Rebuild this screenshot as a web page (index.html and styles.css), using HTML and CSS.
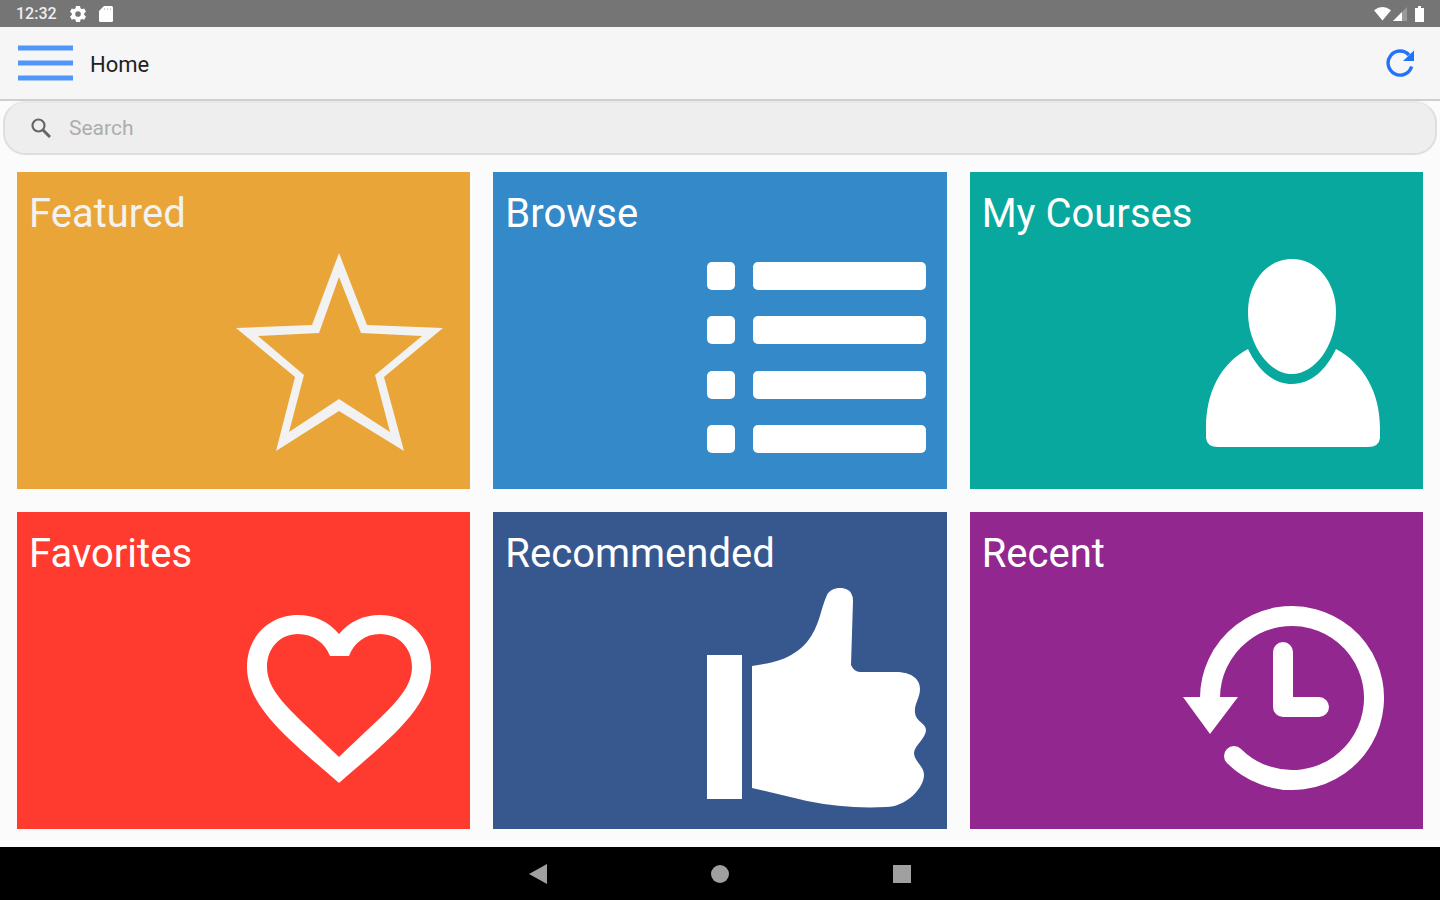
FILE: index.html
```html
<!DOCTYPE html>
<html lang="en">
<head>
<meta charset="utf-8">
<meta name="viewport" content="width=device-width, initial-scale=1">
<title>Home</title>
<link rel="stylesheet" href="styles.css">
</head>
<body>
<div class="status">
  <div class="status-group">
    <span class="clock">12:32</span>
    <svg width="16" height="18" viewBox="0 0 16 18" aria-hidden="true"><path fill="#fff" fill-rule="evenodd" d="M6 1h4l.5 2.300 1.500.9 2.200-.8 1.800 3.300-1.800 1.500v1.700l1.800 1.500-1.800 3.300-2.200-.8-1.500.9L10 17H6l-.5-2.200-1.500-.9-2.200.8L0 11.400l1.800-1.500V8.200L0 6.700l1.800-3.300 2.200.8 1.500-.9zM8 6.200a2.800 2.800 0 1 0 0 5.600 2.800 2.800 0 0 0 0-5.600z"/></svg>
    <svg width="14" height="18" viewBox="0 0 14 18" aria-hidden="true"><path fill="#fff" d="M5 1h7.500Q14 1 14 2.500v13q0 1.500-1.500 1.500h-11Q0 17 0 15.500V6z"/><path stroke="#ccc" d="M5.500 3v2M8.500 3v2M11.500 3v2"/></svg>
  </div>
  <div class="status-group status-right">
    <svg width="17" height="16" viewBox="0 0 18 16" aria-hidden="true"><path fill="#fff" d="M0 4q9-7 18 0L9 15z"/></svg>
    <svg width="14" height="14" viewBox="0 0 14 14" aria-hidden="true"><path fill="#999" d="M14 0v14H0z"/><path fill="#fff" d="M9 5v9H0z"/></svg>
    <svg class="battery" width="9" height="16" viewBox="0 0 9 16" aria-hidden="true"><path fill="#fff" d="M3 0h3v2h3v14H0V2h3z"/></svg>
  </div>
</div>

<header class="bar">
  <button class="icon-button" type="button" aria-label="Menu">
    <svg width="55" height="36" viewBox="0 0 55 36"><path stroke="#5197fb" stroke-width="5" d="M0 3h55M0 18h55M0 33h55"/></svg>
  </button>
  <h1 class="bar-title">Home</h1>
  <button class="icon-button" type="button" aria-label="Refresh">
    <svg width="28" height="28" viewBox="0 0 28 28"><path fill="none" stroke="#2272fa" stroke-width="3.400" d="M25.600 17.500A12 12 0 1 1 23 6"/><path fill="#2272fa" d="M28 1.500V12H17z"/></svg>
  </button>
</header>

<main class="content">
  <form class="search" role="search">
    <label class="search-label" for="q" aria-label="Search">
      <svg width="20" height="20" viewBox="0 0 20 20"><circle cx="7.500" cy="7.500" r="6" fill="none" stroke="#666" stroke-width="2.200"/><path stroke="#666" stroke-width="3" d="M12 12l7 7"/></svg>
    </label>
    <input class="search-input" id="q" type="search" placeholder="Search">
  </form>

  <nav class="tiles" aria-label="Courses">
    <a class="tile featured" href="#featured">
      <h2 class="tile-title">Featured</h2>
      <svg class="tile-icon" viewBox="0 0 220 220"><path fill-rule="evenodd" d="M110 5l28 72 76 3-59 49 20 74-65-40-63 40 19-74L7 80l76-3zM110 29L90 85l-61 3 46 39-15 57 50-33 51 33-15-57 47-39-61-3z"/></svg>
    </a>
    <a class="tile browse" href="#browse">
      <h2 class="tile-title">Browse</h2>
      <svg class="tile-icon" viewBox="0 0 220 220"><rect x="1" y="14" width="28" height="28" rx="5"/><rect x="47" y="14" width="173" height="28" rx="5"/><rect x="1" y="68" width="28" height="28" rx="5"/><rect x="47" y="68" width="173" height="28" rx="5"/><rect x="1" y="123" width="28" height="28" rx="5"/><rect x="47" y="123" width="173" height="28" rx="5"/><rect x="1" y="177" width="28" height="28" rx="5"/><rect x="47" y="177" width="173" height="28" rx="5"/></svg>
    </a>
    <a class="tile courses" href="#courses">
      <h2 class="tile-title">My Courses</h2>
      <svg class="tile-icon" viewBox="0 0 220 220"><path d="M110 11C135 11 154 34 154 64C154 97 133 126 110 126C87 126 66 97 66 64C66 34 85 11 110 11z"/><path d="M66 101C76 122 91 136 110 136C129 136 144 122 154 101C182 116 198 145 198 180V190Q197 199 186 199H36Q25 199 24 190V180C24 145 38 116 66 101z"/></svg>
    </a>
    <a class="tile favorites" href="#favorites">
      <h2 class="tile-title">Favorites</h2>
      <svg class="tile-icon" viewBox="0 0 220 220"><path fill-rule="evenodd" d="M110 46C99 33 85 27 69 27C40 27 18 49 18 79C18 120 62 153 110 195C158 153 202 120 202 79C202 49 180 27 151 27C135 27 121 33 110 46zM101 68H120C125 55 136 46 151 46C170 46 183 60 183 79C183 106 154 126 110 169C66 126 38 106 38 79C38 60 51 46 69 46C84 46 96 55 101 68z"/></svg>
    </a>
    <a class="tile recommended" href="#recommended">
      <h2 class="tile-title">Recommended</h2>
      <svg class="tile-icon" viewBox="0 0 220 220"><path d="M1 67h35v144H1z"/><path d="M46 78C57 76 66 75 74 72C85 68 94 62 101 54C114 38 114 22 121 7C125-2 141-2 145 5Q147 8 147 13L145 77Q148 84 154 84H190C204 84 214 90 214 101C214 110 208 116 209 125C210 134 220 135 220 142C220 150 208 158 208 165C208 173 218 178 218 187C218 200 200 219 180 219Q140 221 101 213L46 200z"/></svg>
    </a>
    <a class="tile recent" href="#recent">
      <h2 class="tile-title">Recent</h2>
      <svg class="tile-icon" viewBox="0 0 220 220"><path class="line" d="M52 168A82 82 0 1 0 28 110"/><path d="M1 109h55l-28 37z"/><path class="line" d="M101 64v55h36"/></svg>
    </a>
  </nav>
</main>

<footer class="system-nav">
  <button class="icon-button" type="button" aria-label="Back"><svg width="18" height="20" viewBox="0 0 18 20"><path fill="#a0a0a0" d="M18 0v20L0 10z"/></svg></button>
  <button class="icon-button" type="button" aria-label="Home screen"><svg width="18" height="18" viewBox="0 0 18 18"><circle cx="9" cy="9" r="9" fill="#a0a0a0"/></svg></button>
  <button class="icon-button" type="button" aria-label="Recent apps"><svg width="18" height="18" viewBox="0 0 18 18"><path fill="#a0a0a0" d="M0 0h18v18H0z"/></svg></button>
</footer>
</body>
</html>
```
FILE: styles.css
```css
* { box-sizing: border-box; }

body {
  margin: 0;
  min-height: 100vh;
  display: flex;
  flex-direction: column;
  background: #fbfbfb;
  font-family: Roboto, "Liberation Sans", sans-serif;
}

svg { display: block; }

.icon-button {
  padding: 0;
  border: 0;
  background: none;
  cursor: pointer;
}

.status {
  display: flex;
  justify-content: space-between;
  height: 27px;
  padding: 0 16px;
  background: #757575;
  color: #fff;
}

.status-group { display: flex; align-items: center; gap: 13px; }
.status-right { gap: 2px; }
.battery { margin-left: 6px; }
.clock { font-size: 16px; font-weight: 500; color: #eee; }

.bar {
  display: flex;
  align-items: center;
  gap: 17px;
  height: 74px;
  padding: 0 26px 0 18px;
  background: #f6f6f6;
  border-bottom: 2px solid #cfcfcf;
}

.bar-title {
  flex: 1;
  margin: 0;
  padding-top: 3px;
  font-size: 22px;
  font-weight: 400;
  color: #222;
}

.content { flex: 1; display: flex; flex-direction: column; }

.search {
  display: flex;
  align-items: center;
  gap: 18px;
  height: 54px;
  margin: 0 3px;
  padding: 0 26px;
  background: #eee;
  border: 2px solid #dedede;
  border-top-color: #e8e8e8;
  border-radius: 22px;
}

.search-input {
  flex: 1;
  min-width: 0;
  padding: 0;
  border: 0;
  outline: 0;
  background: none;
  font: 400 21px/28px Roboto, "Liberation Sans", sans-serif;
  color: #333;
}

.search-input::placeholder { color: #adadad; opacity: 1; }

.tiles {
  flex: 1;
  display: grid;
  grid-template-columns: repeat(3, 1fr);
  grid-auto-rows: 1fr;
  gap: 23px;
  padding: 17px 17px 18px;
}

.tile {
  display: flex;
  flex-direction: column;
  justify-content: space-between;
  min-height: 317px;
  padding: 17px 21px 21px 12px;
  color: #fff;
  text-decoration: none;
}

.tile-title { margin: 0; font-size: 40px; line-height: 50px; font-weight: 400; }

.tile-icon {
  align-self: flex-end;
  width: 220px;
  height: 220px;
  overflow: visible;
  fill: currentColor;
}

.line {
  fill: none;
  stroke: currentColor;
  stroke-width: 20px;
  stroke-linecap: round;
  stroke-linejoin: round;
}

.featured { background: #e9a537; color: #f2f2f2; }
.browse { background: #3489c9; }
.courses { background: #08a89e; }
.favorites { background: #ff3b30; }
.recommended { background: #37588f; }
.recent { background: #92278f; }

.system-nav {
  display: flex;
  justify-content: center;
  align-items: center;
  gap: 164px;
  height: 53px;
  background: #000;
}
```
